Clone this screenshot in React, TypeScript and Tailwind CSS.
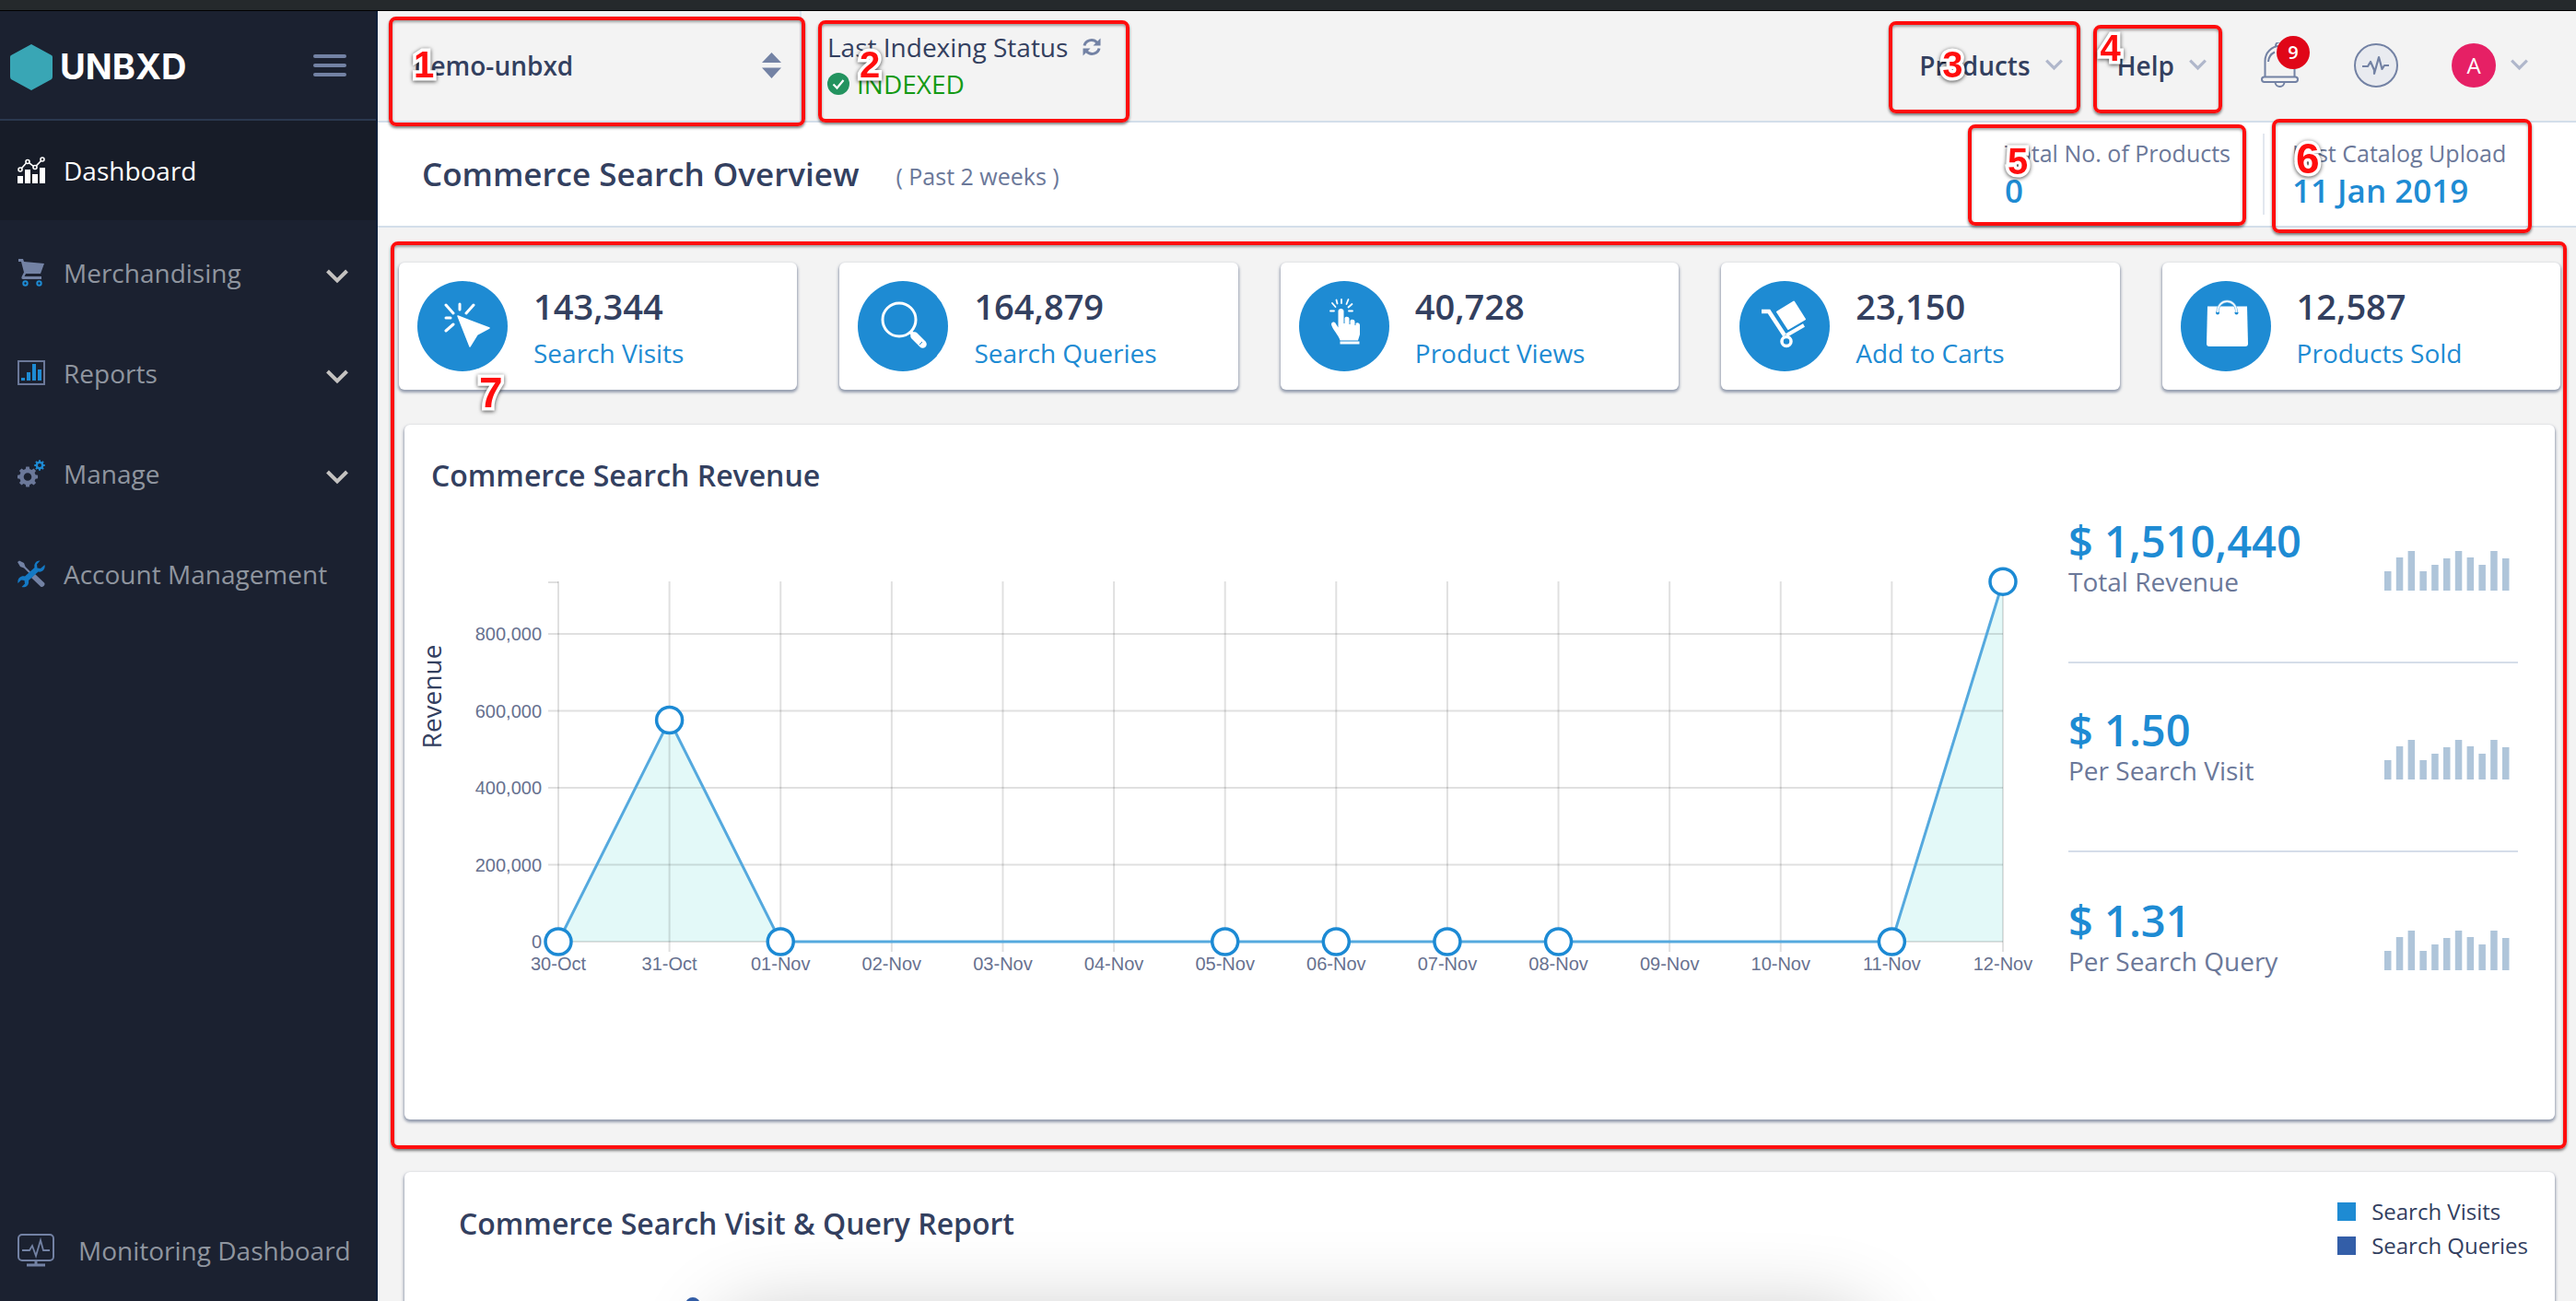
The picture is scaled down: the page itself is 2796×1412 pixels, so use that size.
import React from "react";

const NAVY = "#33405f";

function Tag({ n, big, className }: { n: number; big?: boolean; className: string }) {
  return (
    <span
      className={
        "pointer-events-none absolute z-20 font-['Liberation_Sans',sans-serif] leading-10 font-bold text-[#ff0d0d] [-webkit-text-stroke:7px_white] [paint-order:stroke] drop-shadow-[0_1px_2px_rgba(0,0,0,0.7)] " +
        (big ? "text-[46px] " : "text-[40px] ") +
        className
      }
    >
      {n}
    </span>
  );
}

function Frame({ className }: { className: string }) {
  return (
    <span
      aria-hidden
      className={
        "pointer-events-none absolute z-10 rounded-lg border-4 border-[#ff0d0d] shadow-[0_2px_3px_rgba(0,0,0,0.5),inset_0_2px_3px_rgba(0,0,0,0.35)] " +
        className
      }
    />
  );
}

function Chevron({ className }: { className: string }) {
  return (
    <svg viewBox="0 0 24 16" className={className} fill="none" stroke="currentColor" strokeWidth="4">
      <path d="M1.5 2 12 12.500 22.500 2" />
    </svg>
  );
}

/* ---------- sidebar icons ---------- */

function DashboardIcon() {
  return (
    <svg viewBox="0 0 30 30" className="size-[30px]" fill="#fff" stroke="none">
      <path d="M0 21h6v8H0zM8 14h6v15H8zM16 19h6v10h-6zM24 12h6v17h-6z" />
      <g fill="none" stroke="#fff" strokeWidth="1.6">
        <circle cx="3" cy="14" r="2" />
        <circle cx="11" cy="5.500" r="2" />
        <circle cx="19" cy="11.500" r="2" />
        <circle cx="27" cy="3" r="2" />
        <path d="m4.500 12.500 5-5.500M12.700 6.800l4.600 3.500M20.400 9.900l5.200-5.400" />
      </g>
    </svg>
  );
}
function CartIcon() {
  return (
    <svg viewBox="0 0 30 30" className="size-[30px]">
      <path fill="#7382a4" d="M1 0h5l1 3 22 2-4 11H9l-1.500 3H26v3H6c-2 0-2-2-1-3.500l2-4L4 3H1z" />
      <g fill="none" stroke="#1e8bd3" strokeWidth="2">
        <circle cx="8.500" cy="26.500" r="2.200" />
        <circle cx="23.500" cy="26.500" r="2.200" />
      </g>
    </svg>
  );
}
function ReportsIcon() {
  return (
    <svg viewBox="0 0 30 28" className="w-[30px]">
      <rect x="1" y="1" width="28" height="25" fill="none" stroke="#6b7899" strokeWidth="2" />
      <path fill="#1e8bd3" d="M4 19h4v3H4zM10 13h4v9h-4zM16 4h4v18h-4zM22 10h4v12h-4z" />
    </svg>
  );
}
function gear(cx: number, cy: number, teeth: number, outer: number, inner: number) {
  const pts: string[] = [];
  for (let i = 0; i < teeth; i++) {
    const a = (i * 2 * Math.PI) / teeth;
    const s = Math.PI / teeth;
    [
      [-0.65, inner],
      [-0.4, outer],
      [0.4, outer],
      [0.65, inner],
    ].forEach(([k, r]) => pts.push((cx + r * Math.sin(a + k * s)).toFixed(2) + " " + (cy - r * Math.cos(a + k * s)).toFixed(2)));
  }
  return "M" + pts.join("L") + "Z";
}
function hole(cx: number, cy: number, r: number) {
  return `M${cx - r} ${cy}a${r} ${r} 0 1 0 ${2 * r} 0a${r} ${r} 0 1 0 ${-2 * r} 0Z`;
}
function GearsIcon() {
  return (
    <svg viewBox="0 0 30 30" className="size-[30px]" fillRule="evenodd">
      <path fill="#6b7899" d={gear(11, 18.5, 8, 11.2, 8.8) + hole(11, 18.5, 4.3)} />
      <path fill="#1e8bd3" d={gear(24, 6, 8, 5.8, 4.4) + hole(24, 6, 2)} />
    </svg>
  );
}
function ToolsIcon() {
  return (
    <svg viewBox="0 0 30 30" className="size-[30px]">
      <path fill="#7382a4" d="m0 2 2-1.500 5 2.500 1.500 4 6 6-1.500 1.500-6-6-4-1.500zM15 19l4-4 10 9.500c2 2-2 6-4 4z" />
      <path
        fill="#1479c4"
        d="M24.500.5 21 4.500l.5 4L25 9l4.500-4c1 4-2 8.500-7 7.500L12 22c1 5-3.500 8.500-7.500 7l3.500-3.500L7.500 22 4 21.500.5 25c-1-5 3-8.500 7.500-7.500L18.500 8c-1-4 2-8 6-7.500z"
      />
    </svg>
  );
}
function MonitorIcon() {
  return (
    <svg viewBox="0 0 40 36" className="w-10" fill="none" stroke="#7382a4" strokeWidth="2">
      <rect x="1" y="1" width="38" height="28" rx="4" />
      <path d="M5 18h8l3-5 4 11 5-17 3 11h7" strokeWidth="1.800" />
      <path d="M20 29v4M10 34h20" strokeWidth="3" />
    </svg>
  );
}

/* ---------- stat card icons ---------- */

function VisitIcon() {
  return (
    <svg viewBox="0 0 98 98" className="size-[98px]">
      <path fill="#fff" stroke="#fff" strokeWidth="1.500" strokeLinejoin="round" d="m44 38 34 13-13 7-8 13z" />
      <path stroke="#fff" strokeWidth="3" strokeLinecap="round" d="m31 26 8 9M46 25v6M61 26l-8 9M31 40h5M39 47l-8 7" />
    </svg>
  );
}
function QueryIcon() {
  return (
    <svg viewBox="0 0 98 98" className="size-[98px]" fill="none" stroke="#fff">
      <circle cx="45" cy="42" r="18" strokeWidth="3" />
      <path d="m57.500 55.500 4 4" strokeWidth="4" />
      <path d="m61.500 59.500 9 9" strokeWidth="8.500" strokeLinecap="round" />
      <path d="m70 66-3 3" stroke="#1e8bd3" strokeWidth="1" />
    </svg>
  );
}
function TapIcon() {
  return (
    <svg viewBox="0 0 98 98" className="size-[98px]" fill="#fff">
      <path d="M42.500 32.500c0-3.500 6-3.500 6 0V46h1v-6c1-2 5-1.500 5 1v6h1v-4c1-2 5-1.500 5 1v4h1v-2c1-1.500 4.500-1 4.500 2v10l-2 6.500H44.500c-1-5-9-13-9.500-17.500 0-3 3.500-3.500 5-.5l2.500 4z" />
      <path d="M44.500 65.500h21v3h-21z" />
      <path fill="none" stroke="#fff" strokeWidth="1.800" strokeLinecap="round" d="m36 24 3.500 4M40.500 20.500l1 4M46 20v4M53.500 20l-2 5M57.500 25l-4 3.500M34 32.500h4M54 32.500h4" />
    </svg>
  );
}
function TrolleyIcon() {
  return (
    <svg viewBox="0 0 98 98" className="size-[98px]" fill="none" stroke="#fff">
      <path fill="#fff" strokeWidth="2" strokeLinejoin="round" d="m41 33.500 18-11 12 19-18 10.500z" />
      <path d="M24 33h8l17 26" strokeWidth="4.500" />
      <path d="m51 59 19-11" strokeWidth="4" />
      <circle cx="51" cy="65.500" r="5" strokeWidth="3.500" />
    </svg>
  );
}
function BagIcon() {
  return (
    <svg viewBox="0 0 98 98" className="size-[98px]">
      <path fill="#fff" d="M29 27.500h43l1 40.500c0 2-1 3-3 3H31c-2 0-3-1-3-3z" />
      <circle cx="40" cy="34.500" r="2" fill="#1e8bd3" />
      <circle cx="60.500" cy="34.500" r="2" fill="#1e8bd3" />
      <path fill="none" stroke="#7dbbe6" strokeWidth="3" d="M40 34c0-16 20.500-16 20.500 0" />
      <path fill="none" stroke="#fff" strokeWidth="1.500" d="M40 34c0-16 20.500-16 20.500 0" />
    </svg>
  );
}

/* ---------- page parts ---------- */

const navItems = [
  { label: "Merchandising", icon: <CartIcon />, menu: true },
  { label: "Reports", icon: <ReportsIcon />, menu: true },
  { label: "Manage", icon: <GearsIcon />, menu: true },
  { label: "Account Management", icon: <ToolsIcon />, menu: false },
];

function Sidebar() {
  return (
    <aside className="flex w-[410px] shrink-0 flex-col border-r-2 border-[#10203a] bg-[#1b2130] text-[28px] text-[#8f959f]">
      <div className="flex h-[119px] items-center justify-between border-b-2 border-[#2a384e] pr-8 pl-[11px]">
        <a href="#home" className="flex items-center gap-2 pt-1">
          <svg viewBox="0 0 46 50" className="w-[46px]">
            <path fill="#39a6b5" d="M23 0 45 12q1 .5 1 2v21q0 2-1 3L23 50 1 38q-1-1-1-3V14q0-1.500 1-2z" />
          </svg>
          <span className="font-['Inter',sans-serif] text-[38px] font-bold text-white">UNBXD</span>
        </a>
        <button aria-label="Toggle menu" className="flex w-9 flex-col gap-1.5">
          <span className="h-1 rounded bg-[#7382a4]" />
          <span className="h-1 rounded bg-[#7382a4]" />
          <span className="h-1 rounded bg-[#7382a4]" />
        </button>
      </div>
      <nav className="flex flex-col">
        <a href="#dashboard" className="mb-0.5 flex h-[108px] items-center gap-5 bg-[#171c28] pl-[19px] text-white">
          <DashboardIcon />
          Dashboard
        </a>
        {navItems.map((it) => (
          <button key={it.label} className="flex h-[109px] items-center gap-5 pr-[30px] pl-[19px] text-left">
            {it.icon}
            <span className="flex-1">{it.label}</span>
            {it.menu && <Chevron className="mt-2 w-6 text-[#c4c2c0]" />}
          </button>
        ))}
      </nav>
      <a href="#monitoring" className="mt-auto mb-[34px] flex items-center gap-[26px] pl-[19px]">
        <MonitorIcon />
        Monitoring Dashboard
      </a>
    </aside>
  );
}

function Header() {
  return (
    <header className="flex h-[121px] shrink-0 border-b-2 border-[#d3deea] text-[28px] text-[#33405f]">
      <div className="relative flex w-[460px] items-center justify-between border-r-2 border-[#d9e2ec] pr-5 pb-0.5 pl-10">
        <button aria-label="Select site" className="flex flex-1 items-center justify-between font-semibold">
          demo-unbxd
          <svg viewBox="0 0 21 28" className="w-[21px]" fill="#7382a4">
            <path d="M10.500 0 21 11H0zM0 16.500h21L10.500 28z" />
          </svg>
        </button>
        <Frame className="top-1.5 -right-1.5 -bottom-1.5 left-3" />
        <Tag n={1} className="top-[38px] left-[39px]" />
      </div>
      <div className="relative ml-[18px] flex w-[338px] flex-col justify-center pb-0.5 pl-2.5">
        <div className="flex items-center gap-4 leading-10">
          Last Indexing Status
          <button aria-label="Refresh status">
            <svg viewBox="0 0 20 20" className="w-5" fill="none" stroke="#7382a4" strokeWidth="3">
              <path d="M2 8.500C3 3 11 0 16 5.500M18 11.500C17 17 9 20 4 14.500" />
              <path fill="#7382a4" stroke="none" d="M19.500.500v8h-8zM.500 19.500v-8h8z" />
            </svg>
          </button>
        </div>
        <div className="flex items-center gap-2 leading-10 text-[#159a15]">
          <svg viewBox="0 0 24 24" className="w-6">
            <circle cx="12" cy="12" r="12" fill="#23935f" />
            <path d="m6.500 12.500 4 4 7-8.500" fill="none" stroke="#fff" strokeWidth="2.200" />
          </svg>
          INDEXED
        </div>
        <Frame className="top-2.5 right-0 -bottom-0.5 left-0" />
        <Tag n={2} className="top-[38px] left-[45px]" />
      </div>
      <div className="ml-auto flex items-center pr-[52px] pb-0.5 font-semibold">
        <div className="relative">
          <button className="flex items-center gap-4 pr-[19px] pl-[33px]">
            Products
            <Chevron className="w-[19px] text-[#b0b7cb]" />
          </button>
          <Frame className="-top-[27px] -bottom-[31px] left-0 right-0" />
          <Tag n={3} className="top-0 left-[58px]" />
        </div>
        <div className="relative ml-3.5">
          <button className="flex items-center gap-4 pr-[17px] pl-[26px]">
            Help
            <Chevron className="w-[19px] text-[#b0b7cb]" />
          </button>
          <Frame className="-top-[23px] -bottom-[31px] left-0 right-0" />
          <Tag n={4} className="-top-[18px] left-2" />
        </div>
        <button aria-label="Notifications" className="relative ml-[42px]">
          <svg viewBox="0 0 41 50" className="w-[41px]" fill="none" stroke="#7382a4" strokeWidth="2">
            <path d="M4.500 38V20a16 16 0 0 1 32 0v18M16 5V4a4.500 4.500 0 0 1 9 0v1" />
            <path d="M8 21a12.500 12.500 0 0 1 7-10.500" />
            <rect x="1" y="37.500" width="39" height="5.500" rx="2.700" />
            <path d="M15.500 43a5 5 0 0 0 10 0" />
          </svg>
          <span className="absolute -top-[7px] -right-3 flex size-[36px] items-center justify-center rounded-full bg-[#e00618] text-xl text-white">
            9
          </span>
        </button>
        <button aria-label="System status" className="ml-[60px]">
          <svg viewBox="0 0 48 48" className="w-12" fill="#e9ebf0" stroke="#7382a4" strokeWidth="2" strokeLinejoin="round">
            <circle cx="24" cy="24" r="23" />
            <path fill="none" d="M9 25h6l3-5 4 9 0 4 5-18 3.500 13 2.500-4h5" strokeWidth="2.200" />
          </svg>
        </button>
        <button aria-label="Account" className="ml-[58px] flex items-center gap-4">
          <span className="flex size-12 items-center justify-center rounded-full bg-[#e62065] text-2xl font-medium text-white">A</span>
          <Chevron className="w-[19px] text-[#b0b7cb]" />
        </button>
      </div>
    </header>
  );
}

function TitleBar() {
  return (
    <section className="flex h-[114px] shrink-0 items-center border-b-2 border-[#d3deea] bg-white">
      <h1 className="pl-12 text-[35px] font-semibold text-[#33405f]">Commerce Search Overview</h1>
      <span className="ml-10 pt-1.5 text-[25px] text-[#6b7899]">( Past 2 weeks )</span>
      <div className="ml-auto flex items-center text-[25px] text-[#6b7899]">
        <div className="relative flex h-[88px] w-[322px] flex-col justify-center border-r-2 border-[#e2e7ef] pl-10">
          <span className="leading-9">Total No. of Products</span>
          <span className="text-[35px] leading-[46px] font-semibold text-[#1e8bd3]">0</span>
          <Frame className="-top-2.5 right-[18px] -bottom-3 left-0" />
          <Tag n={5} className="top-2.5 left-[43px]" />
        </div>
        <div className="relative mr-12 ml-2 flex h-[88px] w-[282px] flex-col justify-center pl-[22px]">
          <span className="leading-9">Last Catalog Upload</span>
          <span className="text-[35px] leading-[46px] font-semibold text-[#1e8bd3]">11 Jan 2019</span>
          <Frame className="-top-4 right-0 -bottom-5 left-0" />
          <Tag n={6} big className="top-[7px] left-[26px]" />
        </div>
      </div>
    </section>
  );
}

const cards = [
  { value: "143,344", label: "Search Visits", icon: <VisitIcon /> },
  { value: "164,879", label: "Search Queries", icon: <QueryIcon /> },
  { value: "40,728", label: "Product Views", icon: <TapIcon /> },
  { value: "23,150", label: "Add to Carts", icon: <TrolleyIcon /> },
  { value: "12,587", label: "Products Sold", icon: <BagIcon /> },
];

const labels = ["30-Oct", "31-Oct", "01-Nov", "02-Nov", "03-Nov", "04-Nov", "05-Nov", "06-Nov", "07-Nov", "08-Nov", "09-Nov", "10-Nov", "11-Nov", "12-Nov"];
const points: [number, number][] = [[0, 0], [1, 576000], [2, 0], [6, 0], [7, 0], [8, 0], [9, 0], [12, 0], [13, 936000]];
const px = (i: number) => 155 + (i * 1568) / 13;
const py = (v: number) => 402 - (v * 334) / 800000;

function RevenueChart() {
  const line = points.map(([i, v]) => px(i) + "," + py(v)).join(" ");
  return (
    <svg viewBox="0 0 1766 460" className="min-w-0 flex-1 self-start overflow-visible" role="img" aria-label="Revenue by day">
      <polygon points={line + " " + px(13) + "," + py(0)} fill="#e3f9f8" />
      <g stroke="#000" strokeOpacity="0.12" strokeWidth="2">
        {labels.map((l, i) => (
          <line key={l} x1={px(i)} x2={px(i)} y1="11" y2="413" />
        ))}
        {[0, 200000, 400000, 600000, 800000].map((v) => (
          <line key={v} x1="144" x2="1723" y1={py(v)} y2={py(v)} />
        ))}
        <line x1="144" x2="155" y1="12" y2="12" />
      </g>
      <g fill="#67718f" fontFamily="Liberation Sans, Arial, sans-serif" fontSize="20">
        {labels.map((l, i) => (
          <text key={l} x={px(i)} y="433" textAnchor="middle">
            {l}
          </text>
        ))}
        {["0", "200,000", "400,000", "600,000", "800,000"].map((t, i) => (
          <text key={t} x="137" y={py(i * 200000) + 7} textAnchor="end">
            {t}
          </text>
        ))}
      </g>
      <text transform="translate(28 136) rotate(-90)" textAnchor="middle" fontSize="28" fill={NAVY}>
        Revenue
      </text>
      <polyline points={line} fill="none" stroke="#55a9de" strokeWidth="3" />
      {points.map(([i, v]) => (
        <circle key={i} cx={px(i)} cy={py(v)} r="14" fill="#fff" stroke="#1c8ad4" strokeWidth="3.500" />
      ))}
    </svg>
  );
}

const stats = [
  { value: "$ 1,510,440", label: "Total Revenue" },
  { value: "$ 1.50", label: "Per Search Visit" },
  { value: "$ 1.31", label: "Per Search Query" },
];
const spark = [21, 36, 43, 21, 28, 35, 43, 36, 28, 43, 35];

function Sparkline() {
  return (
    <svg viewBox="0 0 136 43" className="w-[136px]" fill="#afc5da">
      {spark.map((h, i) => (
        <rect key={i} x={i * 12.8} y={43 - h} width="7.500" height={h} />
      ))}
    </svg>
  );
}

const panel = "rounded-md bg-white shadow-[0_2px_3px_1px_rgba(60,75,110,0.5)]";

export default function App() {
  return (
    <div className="flex h-screen flex-col overflow-hidden bg-[#f3f3f3] font-['Open_Sans',sans-serif]">
      <div className="h-3 shrink-0 border-b border-black bg-[#25292c]" />
      <div className="flex min-h-0 flex-1">
        <Sidebar />
        <main className="flex min-w-0 flex-1 flex-col overflow-hidden">
          <Header />
          <TitleBar />
          <div className="relative mt-[15px] mr-2.5 ml-3.5 shrink-0 pt-[23px] pr-[7px] pb-8 pl-[9px]">
            <div className="grid grid-cols-5 gap-[46px]">
              {cards.map((c) => (
                <article key={c.label} className={"flex h-[138px] items-center gap-7 pl-5 " + panel}>
                  <div className="shrink-0 rounded-full bg-[#1e8bd3]">{c.icon}</div>
                  <div className="pt-2">
                    <div className="text-[38px] leading-[50px] font-semibold text-[#33405f]">{c.value}</div>
                    <div className="text-[28px] leading-[52px] text-[#1e8bd3]">{c.label}</div>
                  </div>
                </article>
              ))}
            </div>
            <section className={"mt-[38px] mr-1.5 ml-1.5 flex h-[754px] flex-col pt-[33px] " + panel}>
              <h2 className="pl-[29px] text-[32px] leading-[44px] font-semibold text-[#33405f]">Commerce Search Revenue</h2>
              <div className="flex pt-[82px] pl-3">
                <RevenueChart />
                <div className="-mt-[105px] mr-10 ml-7 w-[488px] shrink-0">
                  {stats.map((s) => (
                    <div key={s.label} className="flex h-[205px] items-end justify-between border-[#d5dde9] pb-[69px] not-last:border-b-2">
                      <div>
                        <div className="text-[47px] leading-[52px] font-semibold text-[#1e8bd3]">{s.value}</div>
                        <div className="text-[28px] leading-9 text-[#6b7899]">{s.label}</div>
                      </div>
                      <div className="mr-[9px] pb-2">
                        <Sparkline />
                      </div>
                    </div>
                  ))}
                </div>
              </div>
            </section>
            <Frame className="inset-0" />
            <Tag n={7} big className="top-[144px] left-24" />
          </div>
          <section className={"relative mt-[25px] mr-[23px] ml-[29px] flex h-[500px] shrink-0 items-start justify-between overflow-hidden pt-8 pr-[29px] pl-[59px] " + panel}>
            <h2 className="text-[32px] leading-[48px] font-semibold text-[#33405f]">Commerce Search Visit &amp; Query Report</h2>
            <ul className="text-2xl leading-[37px] text-[#33405f]">
              <li className="-mt-2 flex items-center gap-[17px]">
                <span className="size-5 bg-[#1e8bd3]" />
                Search Visits
              </li>
              <li className="flex items-center gap-[17px]">
                <span className="size-5 bg-[#335ea8]" />
                Search Queries
              </li>
            </ul>
            <span className="absolute top-[136px] left-[305px] size-4 rounded-full border-4 border-[#335ea8]" />
            <div className="absolute top-44 right-[760px] left-[360px] h-40 rounded-3xl shadow-[0_0_90px_20px_rgba(0,0,0,0.24)]" />
          </section>
        </main>
      </div>
    </div>
  );
}
